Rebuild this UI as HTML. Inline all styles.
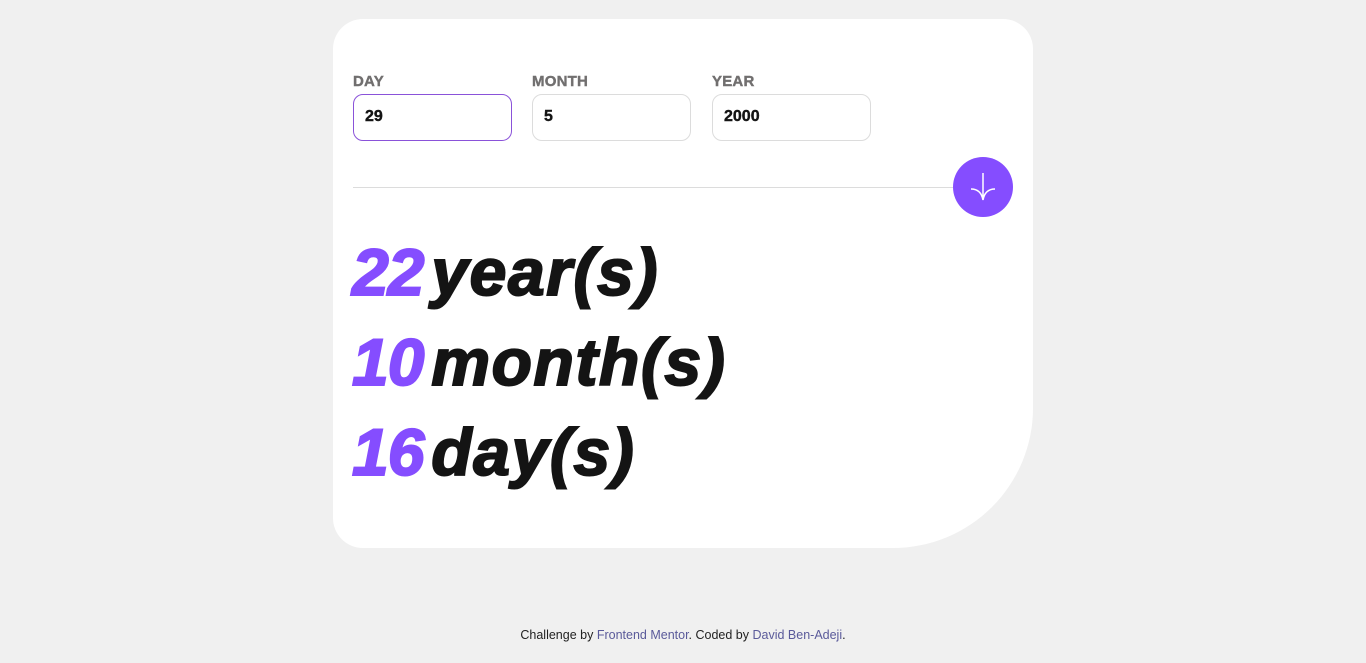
<!DOCTYPE html>
<html><head><meta charset="utf-8"><style>
*{margin:0;padding:0;box-sizing:border-box}
body{width:1366px;height:663px;background:#f0f0f0;font-family:"Liberation Sans",sans-serif;position:relative;overflow:hidden}
.card{position:absolute;left:333px;top:19px;width:700px;height:529px;background:#fff;border-radius:30px 30px 140px 30px}
.lbl{position:absolute;top:54px;font-size:15px;font-weight:bold;color:#716f6f;letter-spacing:0.2px;-webkit-text-stroke:0.4px #716f6f}
.inp{position:absolute;top:75px;width:159px;height:47px;border:1px solid #dcdcdc;border-radius:10px;font-size:16px;font-weight:bold;color:#141414;padding:13px 0 0 11px;-webkit-text-stroke:0.4px #141414}
.line{position:absolute;left:20px;top:168px;width:620px;height:1px;background:#dcdcdc}
.btn{position:absolute;left:620px;top:138px;width:60px;height:60px;border-radius:50%;background:#854dff}
.res{position:absolute;left:19px;font-size:66px;font-weight:bold;font-style:italic;color:#141414;line-height:90px;letter-spacing:1.6px;word-spacing:-12px;white-space:nowrap;-webkit-text-stroke:2px #141414}
.res span{color:#854dff;-webkit-text-stroke:2px #854dff;letter-spacing:-1px}
.foot{position:absolute;top:628px;left:0;width:1366px;text-align:center;font-size:12.5px;color:#222}
.foot a{color:#5a5a9a;text-decoration:none}
</style></head><body>
<div class="card">
<div class="lbl" style="left:20px">DAY</div>
<div class="lbl" style="left:199px">MONTH</div>
<div class="lbl" style="left:379px">YEAR</div>
<div class="inp" style="left:20px;border-color:#8a52d9">29</div>
<div class="inp" style="left:199px">5</div>
<div class="inp" style="left:379px">2000</div>
<div class="line"></div>
<div class="btn"><svg width="60" height="60" viewBox="0 0 60 60"><path d="M30 16V43M18 32Q28 32 30 43Q32 32 42 32" stroke="#fff" stroke-width="1.5" fill="none"/></svg></div>
<div class="res" style="top:208px"><span>22</span> year(s)</div>
<div class="res" style="top:298px"><span>10</span> month(s)</div>
<div class="res" style="top:388px"><span>16</span> day(s)</div>
</div>
<div class="foot">Challenge by <a>Frontend Mentor</a>. Coded by <a>David Ben-Adeji</a>.</div>
</body></html>
